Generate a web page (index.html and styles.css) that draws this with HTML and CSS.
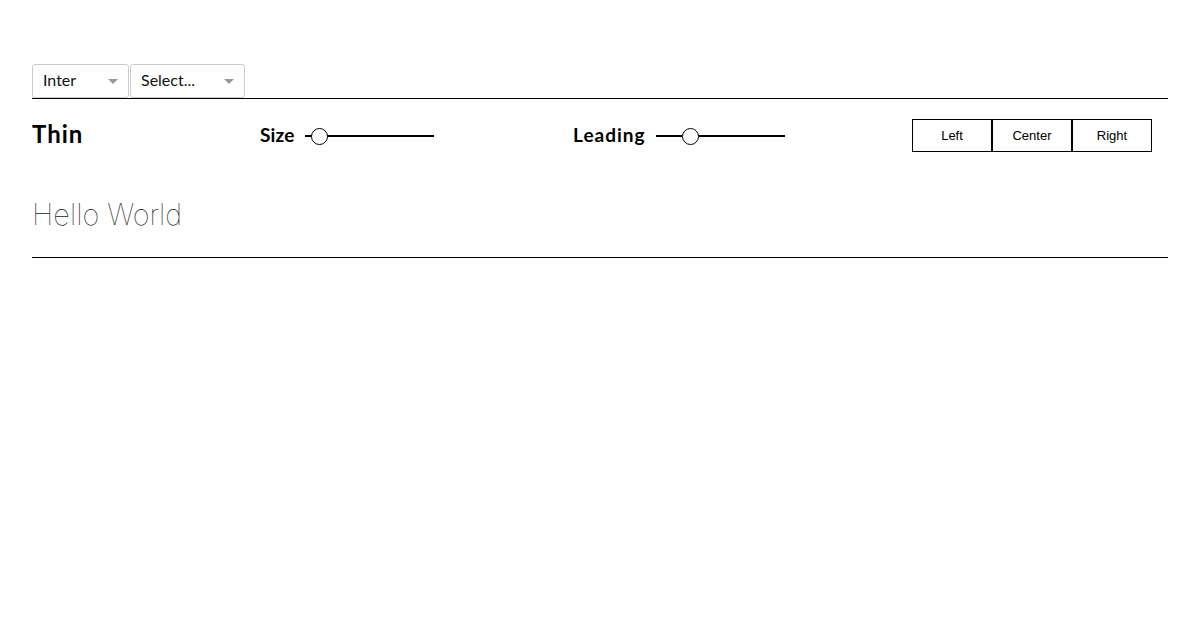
FILE: index.html
```html
<!DOCTYPE html>
<html>
<head>
<meta charset="utf-8">
<link rel="stylesheet" href="styles.css">
</head>
<body>
<div class="page">
  <div class="selects">
    <div class="select select-font">
      <span class="select-value">Inter</span>
      <span class="caret"></span>
    </div>
    <div class="select select-weight">
      <span class="select-value">Select...</span>
      <span class="caret"></span>
    </div>
  </div>
  <div class="panel">
    <div class="controls">
      <div class="weight-name">Thin</div>
      <div class="control">
        <span class="control-label">Size</span>
        <div class="slider">
          <div class="track"></div>
          <div class="thumb" style="left: 6px"></div>
        </div>
      </div>
      <div class="control">
        <span class="control-label control-label-wide">Leading</span>
        <div class="slider">
          <div class="track"></div>
          <div class="thumb" style="left: 26px"></div>
        </div>
      </div>
      <div class="align-group">
        <button class="align-btn">Left</button>
        <button class="align-btn">Center</button>
        <button class="align-btn">Right</button>
      </div>
    </div>
    <div class="preview">Hello World</div>
  </div>
</div>
</body>
</html>
```

FILE: styles.css
```css
* { box-sizing: border-box; }
html, body { margin: 0; padding: 0; background: #fff; }
body { font-family: "Lato", "DejaVu Sans", sans-serif; color: #000; }

.page { padding: 64px 32px 0; }

.selects { display: flex; gap: 1px; }
.select {
  height: 34px;
  border: 1px solid #cccccc;
  border-radius: 3px;
  display: flex;
  align-items: center;
  justify-content: space-between;
  padding: 0 10px 0 10px;
  font-size: 16px;
  color: #111;
}
.select-font { width: 97px; }
.select-weight { width: 115px; }
.select-value { margin-top: -3px; }
.caret {
  width: 0; height: 0;
  border-left: 5px solid transparent;
  border-right: 5px solid transparent;
  border-top: 5px solid #999;
  margin-top: 1px;
}

.panel { border-top: 1px solid #000; border-bottom: 1px solid #000; }

.controls {
  display: grid;
  grid-template-columns: 228px 313px 339px 240px;
  align-items: center;
  padding: 20px 0 20px;
}
.weight-name { font-size: 24px; font-weight: 700; letter-spacing: 1px; margin-top: -4px; }
.control { display: flex; align-items: center; gap: 10px; }
.control-label { font-size: 19px; font-weight: 700; letter-spacing: 0.2px; margin-top: -3px; }
.control-label-wide { letter-spacing: 1px; }
.slider { position: relative; width: 129px; height: 18px; }
.track { position: absolute; left: 0; right: 0; top: 8px; height: 2px; background: #000; }
.thumb {
  position: absolute; top: 1px;
  width: 17px; height: 17px;
  border: 1px solid #000; border-radius: 50%;
  background: #fff;
}

.align-group { display: flex; }
.align-btn {
  width: 80px; height: 33px;
  border: 1px solid #000;
  background: #fff;
  font-family: "Liberation Sans", Arial, sans-serif;
  font-size: 13px;
  color: #000;
  padding: 0;
}

.preview {
  font-family: "Inter", sans-serif;
  font-weight: 100;
  font-size: 29px;
  color: #222;
  padding: 23px 0 22px 0;
  line-height: 40px;
}
```
